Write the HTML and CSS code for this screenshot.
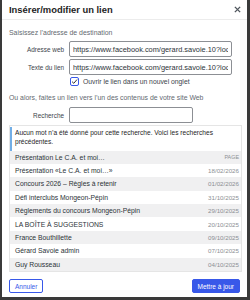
FILE: index.html
```html
<!DOCTYPE html>
<html lang="fr">
<head>
    <meta charset="UTF-8">
    <title>Insérer/modifier un lien</title>
    <link rel="stylesheet" href="styles.css">
</head>
<body>
    <div class="dialog">
        <div class="dialog-header">
            <h1>Insérer/modifier un lien</h1>
            <svg class="close" viewBox="0 0 8 8" width="7" height="7"><path d="M1 1 L7 7 M7 1 L1 7" stroke="#50575e" stroke-width="1.6"/></svg>
        </div>

        <div class="dialog-body">
            <p class="hint">Saisissez l’adresse de destination</p>

            <div class="field">
                <label>Adresse web</label>
                <input type="text" class="text-input" value="https://www.facebook.com/gerard.savoie.10?locale=fr_CA">
            </div>
            <div class="field">
                <label>Texte du lien</label>
                <input type="text" class="text-input" value="https://www.facebook.com/gerard.savoie.10?locale=fr_CA">
            </div>
            <div class="check-row">
                <span class="checkbox">
                    <svg viewBox="0 0 10 10" width="7" height="7"><path d="M1.5 5.2 L4 7.6 L8.6 2.2" fill="none" stroke="#1e1e1e" stroke-width="1.3"/></svg>
                </span>
                <span>Ouvrir le lien dans un nouvel onglet</span>
            </div>

            <p class="hint second">Ou alors, faites un lien vers l’un des contenus de votre site Web</p>

            <div class="field">
                <label>Recherche</label>
                <input type="text" class="text-input search">
            </div>

            <div class="results">
                <div class="notice">Aucun mot n’a été donné pour cette recherche. Voici les recherches<br>précédentes.</div>
                <ul class="result-list">
                    <li><span>Présentation Le C.A. et moi…</span><span class="info upper">Page</span></li>
                    <li><span>Présentation «Le C.A. et moi…»</span><span class="info">18/02/2026</span></li>
                    <li><span>Concours 2026 – Règles à retenir</span><span class="info">01/02/2026</span></li>
                    <li><span>Défi interclubs Mongeon-Pépin</span><span class="info">31/10/2025</span></li>
                    <li><span>Règlements du concours Mongeon-Pépin</span><span class="info">29/10/2025</span></li>
                    <li><span>LA BOÎTE À SUGGESTIONS</span><span class="info">20/10/2025</span></li>
                    <li><span>France Bouthillette</span><span class="info">09/10/2025</span></li>
                    <li><span>Gérard Savoie admin</span><span class="info">07/10/2025</span></li>
                    <li><span>Guy Rousseau</span><span class="info">04/10/2025</span></li>
                </ul>
            </div>
        </div>

        <div class="dialog-footer">
            <button class="btn btn-secondary">Annuler</button>
            <button class="btn btn-primary">Mettre à jour</button>
        </div>
    </div>
</body>
</html>
```

FILE: styles.css
```css
* {
    margin: 0;
    padding: 0;
    box-sizing: border-box;
}

body {
    font-family: 'Liberation Sans', Arial, sans-serif;
    background: #3a3a3a;
    width: 250px;
    height: 300px;
    overflow: hidden;
    color: #2c3338;
}

.dialog {
    background: #fff;
    margin: 0 3px 0 2px;
    height: 297px;
    overflow: hidden;
}

.dialog-header {
    display: flex;
    justify-content: space-between;
    align-items: center;
    height: 20px;
    padding: 0 6px 0 7px;
    border-bottom: 1px solid #ececec;
}

.dialog-header h1 {
    font-size: 9.4px;
    font-weight: bold;
    color: #1e1e1e;
}

.dialog-body {
    padding: 0 5px 0 7px;
}

.hint {
    font-size: 6.9px;
    line-height: 10px;
    color: #646970;
    margin: 8px 0 3px;
}

.hint.second {
    margin: 7px 0 4px;
}

.field {
    display: flex;
    align-items: center;
    margin-bottom: 2px;
}

.field label {
    width: 60px;
    text-align: right;
    font-size: 6.4px;
    color: #3c434a;
    padding-right: 5px;
}

.text-input {
    width: 163px;
    height: 16px;
    border: 1px solid #8c8f94;
    border-radius: 2px;
    padding: 0 3px;
    font-family: 'Liberation Sans', Arial, sans-serif;
    font-size: 7.4px;
    color: #2c3338;
    outline: none;
}

.text-input.search {
    width: 124px;
}

.check-row {
    display: flex;
    align-items: center;
    gap: 4px;
    height: 9px;
    margin-left: 61px;
    font-size: 6.8px;
    color: #3c434a;
}

.checkbox {
    width: 9px;
    height: 9px;
    border: 1px solid #3858e9;
    border-radius: 2px;
    display: flex;
    align-items: center;
    justify-content: center;
}

.results {
    border: 1px solid #e5e5e5;
    width: 233px;
}

.notice {
    margin: 1px 0 0;
    height: 23.5px;
    border-left: 2px solid #72aee6;
    padding: 2px 0 0 3px;
    font-size: 6.6px;
    line-height: 8.7px;
    white-space: nowrap;
    color: #1e1e1e;
}

.result-list {
    list-style: none;
}

.result-list li {
    display: flex;
    justify-content: space-between;
    align-items: center;
    height: 13.4px;
    padding: 0 2px 0 5px;
    font-size: 6.8px;
    color: #2c3338;
}

.result-list li:nth-child(odd) {
    background: #f0f0f1;
}

.info {
    font-size: 6.2px;
    color: #8c8f94;
}

.info.upper {
    text-transform: uppercase;
    font-size: 5.4px;
}

.dialog-footer {
    display: flex;
    justify-content: space-between;
    align-items: center;
    padding: 7px 7px 0 7px;
}

.btn {
    height: 14px;
    border-radius: 2px;
    font-family: 'Liberation Sans', Arial, sans-serif;
    font-size: 6.5px;
    padding: 0 5px;
}

.btn-secondary {
    background: #fff;
    color: #3858e9;
    border: 1px solid #3858e9;
}

.btn-primary {
    background: #3858e9;
    color: #fff;
    border: 1px solid #3858e9;
}
```
